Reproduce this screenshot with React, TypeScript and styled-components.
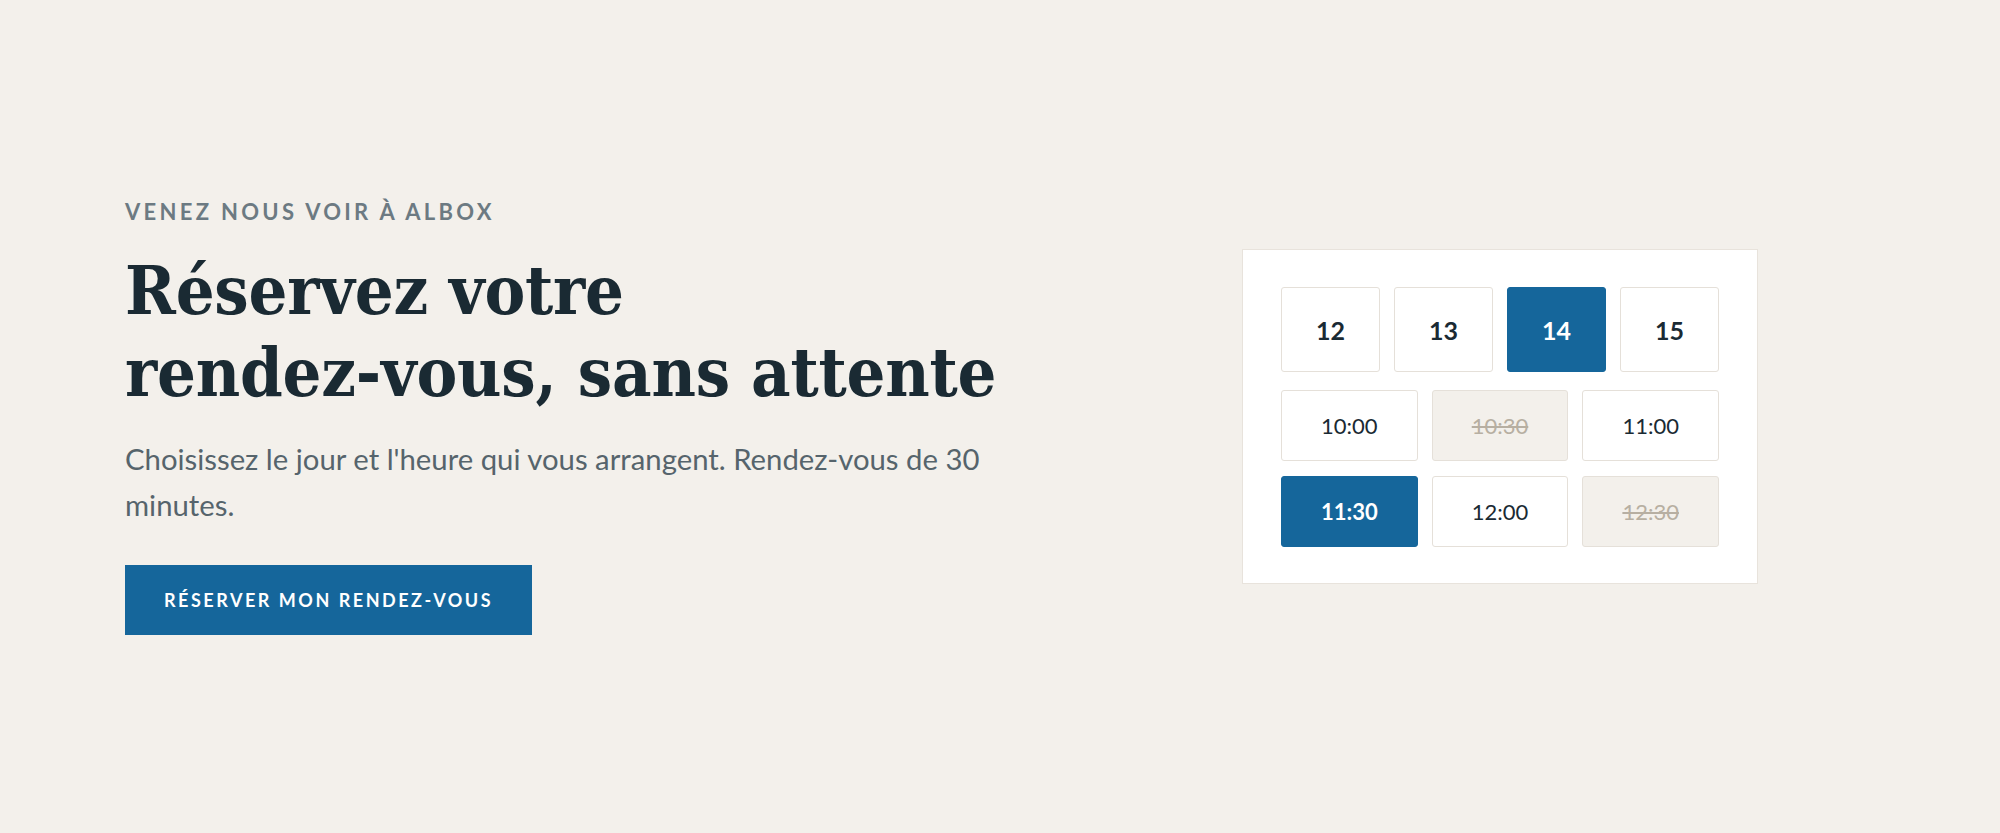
import React from "react";
import styled, { createGlobalStyle } from "styled-components";

const GlobalStyle = createGlobalStyle`
  * {
    box-sizing: border-box;
  }

  body {
    margin: 0;
    background-color: #f3f0eb;
    font-family: Lato, "Noto Sans", sans-serif;
    color: #1a2a33;
  }
`;

const Hero = styled.section`
  min-height: 833px;
  padding: 0 125px;
  display: grid;
  grid-template-columns: 880px 1fr;
  column-gap: 120px;
  align-items: center;
`;

const Intro = styled.div`
  display: flex;
  flex-direction: column;
  align-items: flex-start;
`;

const Eyebrow = styled.p`
  margin: 0 0 24px;
  font-size: 22px;
  line-height: 26px;
  font-weight: 700;
  letter-spacing: 0.15em;
  text-transform: uppercase;
  color: #6c7a82;
`;

const Title = styled.h1`
  margin: 0 0 23px;
  font-family: "DejaVu Serif Condensed", "DejaVu Serif", serif;
  font-stretch: condensed;
  font-size: 68px;
  line-height: 82px;
  font-weight: 700;
  letter-spacing: -0.2px;
  color: #1a2a33;
`;

const Lead = styled.p`
  margin: 0 0 37px;
  max-width: 880px;
  font-size: 29.3px;
  line-height: 46px;
  color: #56646c;
`;

const Cta = styled.button`
  border: 0;
  border-radius: 0;
  padding: 24px 39px;
  background-color: #15669b;
  color: #ffffff;
  font-family: Lato, "Noto Sans", sans-serif;
  font-size: 18px;
  line-height: 22px;
  font-weight: 700;
  letter-spacing: 0.14em;
  text-transform: uppercase;
  cursor: pointer;
`;

const Aside = styled.div`
  display: flex;
  justify-content: center;
`;

const Picker = styled.div`
  width: 516px;
  padding: 37px 38px 36px;
  background-color: #ffffff;
  border: 1px solid #e8e3dc;
  display: flex;
  flex-direction: column;
  gap: 18px;
`;

const Grid = styled.div<{ $cols: number }>`
  display: grid;
  grid-template-columns: repeat(${(p) => p.$cols}, 1fr);
  column-gap: 14px;
  row-gap: 15px;
`;

type SlotState = "idle" | "active" | "taken";

const Slot = styled.button<{ $state: SlotState; $tall?: boolean }>`
  height: ${(p) => (p.$tall ? "85px" : "71px")};
  border-radius: 3px;
  border: 1px solid
    ${(p) => (p.$state === "active" ? "#15669b" : "#e5e0d9")};
  background-color: ${(p) =>
    p.$state === "active" ? "#15669b" : p.$state === "taken" ? "#f3f0eb" : "#ffffff"};
  color: ${(p) =>
    p.$state === "active" ? "#ffffff" : p.$state === "taken" ? "#b7afa2" : "#1a2a33"};
  text-decoration: ${(p) => (p.$state === "taken" ? "line-through" : "none")};
  font-family: Lato, "Noto Sans", sans-serif;
  font-size: ${(p) => (p.$tall ? "25px" : "22px")};
  font-weight: ${(p) => (p.$tall || p.$state === "active" ? 700 : 400)};
  cursor: ${(p) => (p.$state === "taken" ? "default" : "pointer")};
`;

const days = [
  { label: "12", state: "idle" as SlotState },
  { label: "13", state: "idle" as SlotState },
  { label: "14", state: "active" as SlotState },
  { label: "15", state: "idle" as SlotState },
];

const hours = [
  { label: "10:00", state: "idle" as SlotState },
  { label: "10:30", state: "taken" as SlotState },
  { label: "11:00", state: "idle" as SlotState },
  { label: "11:30", state: "active" as SlotState },
  { label: "12:00", state: "idle" as SlotState },
  { label: "12:30", state: "taken" as SlotState },
];

export default function App() {
  return (
    <>
      <GlobalStyle />
      <Hero>
        <Intro>
          <Eyebrow>Venez nous voir à Albox</Eyebrow>
          <Title>
            Réservez votre
            <br />
            rendez-vous, sans attente
          </Title>
          <Lead>
            Choisissez le jour et l'heure qui vous arrangent. Rendez-vous de 30
            minutes.
          </Lead>
          <Cta>Réserver mon rendez-vous</Cta>
        </Intro>
        <Aside>
          <Picker>
            <Grid $cols={4}>
              {days.map((d) => (
                <Slot key={d.label} $state={d.state} $tall>
                  {d.label}
                </Slot>
              ))}
            </Grid>
            <Grid $cols={3}>
              {hours.map((h) => (
                <Slot key={h.label} $state={h.state} disabled={h.state === "taken"}>
                  {h.label}
                </Slot>
              ))}
            </Grid>
          </Picker>
        </Aside>
      </Hero>
    </>
  );
}
